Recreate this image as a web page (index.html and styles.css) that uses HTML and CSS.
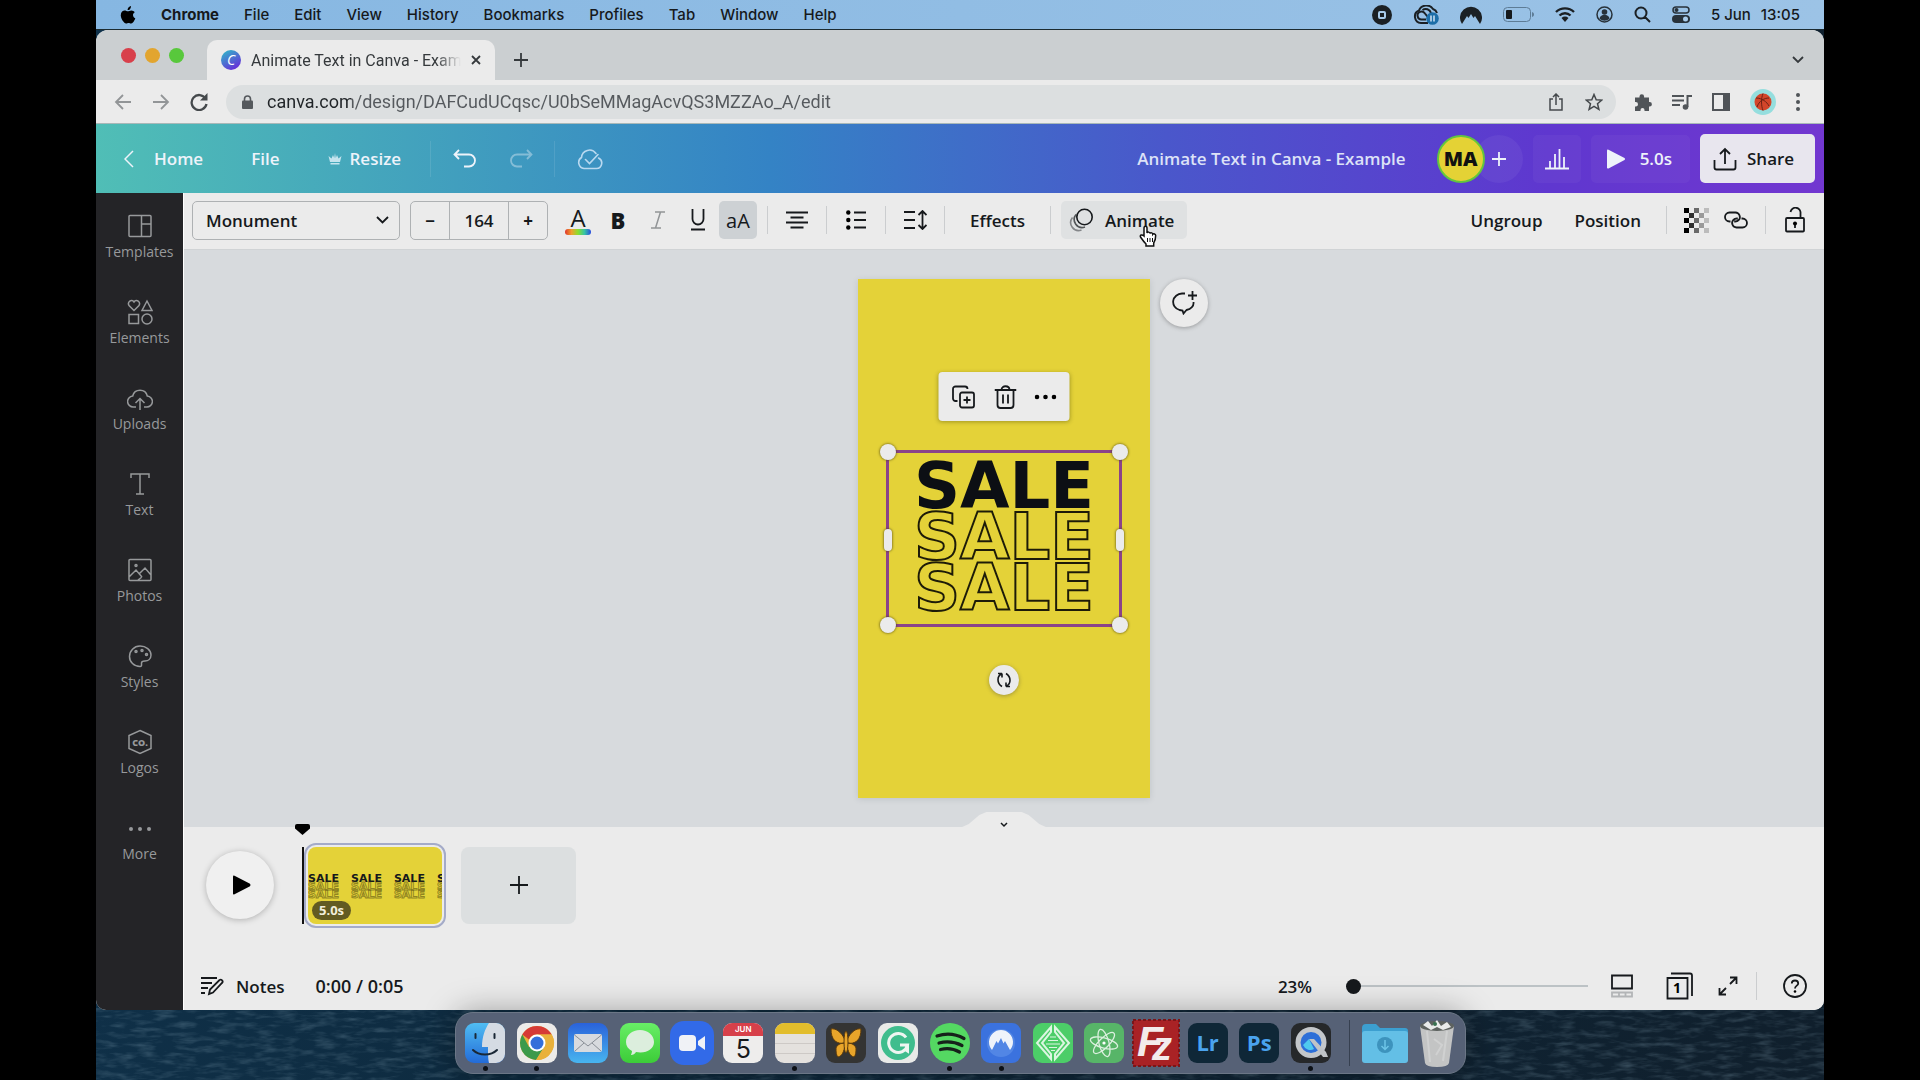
FILE: index.html
```html
<!DOCTYPE html>
<html lang="en">
<head>
  <meta charset="UTF-8">
  <title>Animate Text in Canva - Example</title>
  <link rel="stylesheet" href="styles.css">
</head>
<body>
<div class="desktop">
  <svg class="water" aria-hidden="true">
    <filter id="waves">
      <feTurbulence type="fractalNoise" baseFrequency="0.05 0.2" numOctaves="3" seed="4"/>
      <feColorMatrix values="0 0 0 0 0.3  0 0 0 0 0.45  0 0 0 0 0.55  1.6 0 0 0 -0.7"/>
    </filter>
    <rect width="100%" height="100%" filter="url(#waves)"/>
  </svg>

  <!-- macOS menu bar -->
  <nav class="menubar">
    <svg class="apple" viewBox="0 0 16 18"><path d="M11 0c.1 1.100-.3 2.100-.9 2.900-.6.8-1.600 1.300-2.500 1.200C7.500 3.100 8 2.100 8.500 1.500 9.200.7 10.200.1 11 0zM14.800 6.200c-1.100.7-1.800 1.600-1.800 2.900 0 1.500.9 2.700 2.300 3.200-.5 1.600-1.400 3.200-2.400 4.300-.7.8-1.700 1.200-2.700.8-1.200-.5-2-.5-3.200 0-1 .4-1.900.1-2.600-.6C1.500 13.900.1 10.200 1 7.500 1.600 5.600 3 4.500 4.600 4.500c1.300 0 2.300.8 3.200.8s2-.9 3.600-.9c1.300 0 2.600.7 3.400 1.800z"/></svg>
    <a href="#"><b>Chrome</b></a>
    <a href="#">File</a>
    <a href="#">Edit</a>
    <a href="#">View</a>
    <a href="#">History</a>
    <a href="#">Bookmarks</a>
    <a href="#">Profiles</a>
    <a href="#">Tab</a>
    <a href="#">Window</a>
    <a href="#">Help</a>
    <div class="tray">
      <svg width="20" height="20" viewBox="0 0 20 20"><circle cx="10" cy="10" r="10" fill="#1b2024"/><rect x="7" y="7" width="6" height="6" rx="1" fill="none" stroke="#a8cbea" stroke-width="2"/></svg>
      <svg width="26" height="20" viewBox="0 0 26 20"><g fill="none" stroke="#1b2024" stroke-width="2"><path d="M15 18H8a6.500 6.500 0 0 1-2-12.500A8 8 0 0 1 20 4a6 6 0 0 1 4 4"/><path d="M13 14.500H9a4 4 0 1 1 3-6l4 5M9.500 5a5.500 5.500 0 0 1 8.500 3"/></g><circle cx="19.500" cy="13.500" r="6.300" fill="#1c6ea8"/><path d="M18 10.500v6M21 10.500v6" stroke="#cfe4f4" stroke-width="1.500"/></svg>
      <svg width="22" height="18" viewBox="0 0 22 18"><path d="M2 18A11 11 0 1 1 20 18L15 10l-1.500 2L11 8l-2.500 4L7 10z" fill="#1b2024"/></svg>
      <svg width="31" height="15" viewBox="0 0 31 15"><rect x=".5" y=".5" width="27" height="14" rx="4" fill="none" stroke="#5d7c96"/><rect x="3" y="3" width="6" height="9" rx="1" fill="#15191c"/><path d="M29 5v5c1.500-.5 2-1.500 2-2.500S30.500 5.500 29 5z" fill="#5d7c96"/></svg>
      <svg width="20" height="15" viewBox="0 0 20 15"><g fill="none" stroke="#1b2024" stroke-width="2.400"><path d="M1 5a13 13 0 0 1 18 0M4.500 8.500a8 8 0 0 1 11 0"/></g><path d="M10 15l-3.500-4a5 5 0 0 1 7 0z" fill="#1b2024"/></svg>
      <svg width="17" height="17" viewBox="0 0 17 17"><circle cx="8.500" cy="8.500" r="7.500" fill="none" stroke="#28323a" stroke-width="1.500"/><circle cx="8.500" cy="6" r="2.800" fill="#28323a"/><path d="M3.500 12.500c1-5 9-5 10 0-3 3-7 3-10 0z" fill="#28323a"/></svg>
      <svg width="17" height="17" viewBox="0 0 17 17"><path d="M11 11l5 5M12.500 7a5.500 5.500 0 1 1-11 0 5.500 5.500 0 0 1 11 0z" fill="none" stroke="#1b2024" stroke-width="2"/></svg>
      <svg width="18" height="18" viewBox="0 0 18 18"><rect x="1" y="1" width="16" height="6" rx="3" fill="none" stroke="#28323a" stroke-width="1.500"/><circle cx="4.500" cy="4" r="2" fill="#28323a"/><rect y="9" width="18" height="8" rx="4" fill="#28323a"/><circle cx="13.500" cy="13" r="2.500" fill="#a8cbea"/></svg>
      <span class="clock"><span>5 Jun</span><span>13:05</span></span>
    </div>
  </nav>

  <div class="window">
    <!-- Browser chrome -->
    <div class="tabstrip">
      <div class="lights"><i class="red"></i><i class="amber"></i><i class="green"></i></div>
      <div class="tab">
        <svg class="favicon" width="20" height="20" viewBox="0 0 20 20"><defs><linearGradient id="canva" x1="0" y1="0" x2=".6" y2="1"><stop offset="0" stop-color="#2cc0c8"/><stop offset="1" stop-color="#6531d8"/></linearGradient></defs><circle cx="10" cy="10" r="10" fill="url(#canva)"/><text x="10" y="15">C</text></svg>
        <span class="tab-title">Animate Text in Canva - Example</span>
        <button class="plain" aria-label="Close tab"><svg width="10" height="10" viewBox="0 0 10 10"><path d="M1 1l8 8M9 1l-8 8" class="line2"/></svg></button>
      </div>
      <button class="plain" aria-label="New tab"><svg width="16" height="16" viewBox="0 0 16 16"><path d="M8 1v14M1 8h14" class="line2"/></svg></button>
      <button class="plain push" aria-label="Search tabs"><svg width="12" height="8" viewBox="0 0 12 8"><path d="M1 1l5 5 5-5" class="line2"/></svg></button>
    </div>

    <div class="addressbar">
      <div class="nav-icons">
        <button class="plain faint" aria-label="Back"><svg width="18" height="18" viewBox="0 0 18 18"><path d="M17 9H2M9 2L2 9l7 7" class="line2"/></svg></button>
        <button class="plain faint" aria-label="Forward"><svg width="18" height="18" viewBox="0 0 18 18"><path d="M1 9h15M9 2l7 7-7 7" class="line2"/></svg></button>
        <button class="plain" aria-label="Reload"><svg width="18" height="18" viewBox="0 0 18 18"><path d="M15.500 5.500A7.500 7.500 0 1 0 16.500 11" fill="none" stroke="currentColor" stroke-width="2.300"/><path d="M17.500 0v7.500H10z" fill="currentColor"/></svg></button>
      </div>
      <div class="pill">
        <svg width="11" height="14" viewBox="0 0 11 14"><path d="M2.500 6V4a3 3 0 0 1 6 0v2" fill="none" stroke="#55595d" stroke-width="1.600"/><rect y="5.500" width="11" height="8.500" rx="1" fill="#55595d"/></svg>
        <input class="url" type="text" aria-label="Address" value="canva.com/design/DAFCudUCqsc/U0bSeMMagAcvQS3MZZAo_A/edit">
        <button class="plain" aria-label="Share page"><svg width="14" height="18" viewBox="0 0 14 18"><path d="M4 6H1v11h12V6h-3M7 12V1M4 4l3-3 3 3" fill="none" stroke="currentColor" stroke-width="1.500"/></svg></button>
        <button class="plain" aria-label="Bookmark"><svg width="18" height="18" viewBox="0 0 18 18"><path d="M9 1.500l2.200 5.200 5.600.4-4.300 3.700 1.400 5.600L9 13.400l-4.900 3 1.400-5.600L1.200 7.100l5.600-.4z" fill="none" stroke="currentColor" stroke-width="1.500"/></svg></button>
      </div>
      <div class="ext-icons">
        <svg width="18" height="18" viewBox="0 0 18 18"><path d="M1 4.500h4.500v-1a2.300 2.300 0 0 1 4.600 0v1H15v4.600h.7a2.200 2.200 0 0 1 0 4.400H15V18h-4.500v-1a2 2 0 0 0-4 0v1H1v-4.500h.8a2.200 2.200 0 0 0 0-4.400H1z" fill="#505458"/></svg>
        <svg width="20" height="16" viewBox="0 0 20 16"><path d="M0 2h12M0 6.500h12M0 11h8" stroke="#505458" stroke-width="2"/><path d="M15.500 13V2H20" fill="none" stroke="#505458" stroke-width="2"/><circle cx="13.500" cy="13" r="2.800" fill="#505458"/></svg>
        <svg width="18" height="18" viewBox="0 0 18 18"><path d="M1 1h16v16H1z" fill="none" stroke="#505458" stroke-width="2"/><path d="M11 1h6v16h-6z" fill="#505458"/></svg>
        <svg width="26" height="26" viewBox="0 0 26 26"><circle cx="13" cy="13" r="13" fill="#95dede"/><circle cx="13" cy="13" r="8.500" fill="#d3452a"/><path d="M6 9c6 0 11 4 13 8M13 4.500c-2 5-2 12 0 17M7 18c2-6 7-9 12-9" fill="none" stroke="#6e2114"/></svg>
        <svg width="4" height="18" viewBox="0 0 4 18"><g fill="#505458"><circle cx="2" cy="2" r="2"/><circle cx="2" cy="9" r="2"/><circle cx="2" cy="16" r="2"/></g></svg>
      </div>
    </div>

    <!-- Canva header -->
    <header class="header">
      <button class="head-btn home"><svg width="10" height="18" viewBox="0 0 10 18"><path d="M9 1L1 9l8 8" fill="none" stroke="currentColor" stroke-width="1.500"/></svg>Home</button>
      <button class="head-btn">File</button>
      <button class="head-btn resize"><svg width="14" height="12" viewBox="0 0 14 12"><path d="M2 9L.5 3l3 2.500L5 2l1.200 3L7 0l.8 5L9 2l1.500 3.500 3-2.500L12 9zM2.500 10h9v1.500h-9z" fill="#c4e4ee"/></svg>Resize</button>
      <span class="head-rule"></span>
      <button class="plain light" aria-label="Undo"><svg width="24" height="20" viewBox="0 0 24 20"><path d="M6 1L1.500 5.500 6 10M2 5.500h14a6 6 0 0 1 0 12h-5" class="line2"/></svg></button>
      <button class="plain light dim" aria-label="Redo"><svg width="24" height="20" viewBox="0 0 24 20"><path d="M18 1l4.500 4.500L18 10M22 5.500H8a6 6 0 0 0 0 12h5" class="line2"/></svg></button>
      <span class="head-rule"></span>
      <svg width="26" height="22" viewBox="0 0 26 22"><path d="M7 20.500a6 6 0 0 1-2.500-11A8 8 0 0 1 19 5.500M21.500 10a5.500 5.500 0 0 1-2 10.500H7M8.500 11.500l4 4L21 6.500" fill="none" stroke="#b9d9f0" stroke-width="1.600" stroke-linecap="round"/></svg>
      <input class="doc-title" type="text" aria-label="Design title" value="Animate Text in Canva - Example">
      <div class="people">
        <span class="me">MA</span>
        <button class="add-person" aria-label="Invite people"><svg width="16" height="16" viewBox="0 0 16 16"><path d="M8 1v14M1 8h14" class="line2"/></svg></button>
      </div>
      <button class="tile chart" aria-label="Insights"><svg width="24" height="22" viewBox="0 0 24 22"><path d="M0 20.500h24M5 20v-7M10 20V6M14.500 20V1M19 20V9" fill="none" stroke="currentColor" stroke-width="1.800"/></svg></button>
      <button class="tile preview"><svg width="18" height="20" viewBox="0 0 18 20"><path d="M0 1.500Q0 0 1.500.7l16 8.300q1 1 0 2l-16 8.400Q0 20 0 18.500z" fill="currentColor"/></svg>5.0s</button>
      <button class="share"><svg width="24" height="24" viewBox="0 0 24 24"><path d="M1.500 13v7.500a2 2 0 0 0 2 2h17a2 2 0 0 0 2-2V13M12 17V2M7 7l5-5 5 5" class="line2"/></svg>Share</button>
    </header>

    <div class="workspace">
      <nav class="sidebar">
        <a href="#"><svg viewBox="0 0 26 26"><path d="M3 2.500h20a1 1 0 0 1 1 1v19a1 1 0 0 1-1 1H3a1 1 0 0 1-1-1v-19a1 1 0 0 1 1-1zM14.500 2.500v21M14.500 11H24"/></svg>Templates</a>
        <a href="#"><svg viewBox="0 0 26 26"><path d="M7 11.500L2 6.500C0 3 4.500-.5 7 3c2.500-3.500 7 0 5 3.500zM20 2l5 9.500H15zM2 15.500h9.500v9H2z"/><circle cx="20" cy="20" r="5"/></svg>Elements</a>
        <a href="#"><svg viewBox="0 0 26 26"><path d="M9 22H6.500a5.500 5.500 0 0 1-.8-11 7.500 7.500 0 0 1 14.600 0A5.500 5.500 0 0 1 19.500 22H17M13 25V14M8.500 18l4.500-4.500 4.500 4.500"/></svg>Uploads</a>
        <a href="#"><svg viewBox="0 0 26 26"><path d="M4 7V3h18v4M13 3v20M9 23h8"/></svg>Text</a>
        <a href="#"><svg viewBox="0 0 26 26"><path d="M3 2.500h20a1 1 0 0 1 1 1v19a1 1 0 0 1-1 1H3a1 1 0 0 1-1-1v-19a1 1 0 0 1 1-1zM2 20l7-7 6 7M12 17l6-6 6 7M11 23l4-3"/><circle cx="9" cy="8.500" r="1"/></svg>Photos</a>
        <a href="#"><svg viewBox="0 0 26 26"><path d="M13 23.500c-6 0-10.500-4.500-10.500-10S7 3 13 3s11 4 11 9c0 4-3 6-6 6-2 0-3.500 0-3.500 2 0 1.500.5 3.500-1.500 3.500z"/><circle cx="9" cy="8.500" r="1"/><circle cx="15" cy="7.500" r="1"/><circle cx="19.500" cy="11.500" r="1"/></svg>Styles</a>
        <a href="#"><svg viewBox="0 0 26 26"><path d="M13 1.500l11 5v13l-11 5-11-5v-13z"/><text x="13" y="17">CO.</text></svg>Logos</a>
        <a href="#"><svg viewBox="0 0 26 26"><g class="solid"><circle cx="4" cy="14" r="2"/><circle cx="13" cy="14" r="2"/><circle cx="22" cy="14" r="2"/></g></svg>More</a>
      </nav>

      <main class="editor">
        <div class="toolbar">
          <div class="font-picker">
            <select aria-label="Font"><option>Monument</option></select>
            <svg width="13" height="8" viewBox="0 0 13 8"><path d="M1 1l5.500 5.500L12 1" class="line2"/></svg>
          </div>
          <div class="stepper">
            <button aria-label="Decrease font size">−</button>
            <input type="text" aria-label="Font size" value="164">
            <button aria-label="Increase font size">+</button>
          </div>
          <div class="tools">
            <button class="tool color" aria-label="Text colour"><span>A</span><i></i></button>
            <button class="tool" aria-label="Bold"><b>B</b></button>
            <button class="tool faint" aria-label="Italic"><svg width="16" height="18" viewBox="0 0 16 18"><path d="M5 1h10M1 17h10M10.500 1l-5 16" fill="none" stroke="currentColor" stroke-width="1.500"/></svg></button>
            <button class="tool" aria-label="Underline"><svg width="16" height="22" viewBox="0 0 16 22"><path d="M2.500 0v10a5.500 5.500 0 0 0 11 0V0M1 20.500h14" class="line2"/></svg></button>
            <button class="tool active" aria-label="Uppercase">aA</button>
          </div>
          <span class="rule"></span>
          <button class="tool" aria-label="Alignment"><svg width="22" height="18" viewBox="0 0 22 18"><path d="M0 1.500h22M4.500 6.500h13M0 11.500h22M4.500 16.500h13" class="line2"/></svg></button>
          <span class="rule"></span>
          <button class="tool" aria-label="List"><svg width="20" height="20" viewBox="0 0 20 20"><path d="M8 2.500h12M8 10h12M8 17.500h12" class="line2"/><circle cx="2.300" cy="2.500" r="2.200"/><circle cx="2.300" cy="10" r="2.200"/><circle cx="2.300" cy="17.500" r="2.200"/></svg></button>
          <span class="rule"></span>
          <button class="tool" aria-label="Spacing"><svg width="23" height="20" viewBox="0 0 23 20"><path d="M0 2h11M0 10h11M0 18h11M18.500 1.500v17M14.500 5l4-4 4 4M14.500 15l4 4 4-4" class="line2"/></svg></button>
          <span class="rule"></span>
          <button class="tool words">Effects</button>
          <span class="rule"></span>
          <button class="tool animate">
            <svg width="24" height="24" viewBox="0 0 24 24"><g fill="none" stroke="currentColor" stroke-width="1.600"><circle cx="15.500" cy="9" r="7.700"/><path d="M7 6.500a8 8 0 0 0 9 12.500" opacity=".7"/><path d="M3.500 9.500a8 8 0 0 0 9 12.500" opacity=".45"/></g></svg>
            Animate
            <svg class="cursor" viewBox="0 0 20 22"><path d="M6 11V3c0-2.500 3-2.500 3 0v5c.5-1.500 3-1 3 .5.600-1.200 2.800-.7 2.800.8.800-1 2.900-.3 2.900 1.300 0 4-.7 5.400-2 7.400V21H8v-2c-2-2-3.500-4-5.500-7C1.500 10 4 9 6 11z" fill="#fff" stroke="#111" stroke-width="1.500"/><path d="M9.500 13v4M12 13v4M14.500 13v4" stroke="#111"/></svg>
          </button>
          <div class="tools push">
            <button class="tool words">Ungroup</button>
            <button class="tool words">Position</button>
          </div>
          <span class="rule"></span>
          <div class="tools">
            <button class="tool" aria-label="Transparency"><svg width="25" height="25" viewBox="0 0 25 25"><path d="M0 0h5v5H0zM0 10h5v5H0zM0 20h5v5H0z"/><path d="M5 5h5v5H5zM5 15h5v5H5z" opacity=".8"/><path d="M10 0h5v5h-5zM10 10h5v5h-5zM10 20h5v5h-5z" opacity=".55"/><path d="M15 5h5v5h-5zM15 15h5v5h-5z" opacity=".35"/><path d="M20 0h5v5h-5zM20 10h5v5h-5zM20 20h5v5h-5z" opacity=".2"/></svg></button>
            <button class="tool" aria-label="Link"><svg width="24" height="18" viewBox="0 0 24 18"><path d="M6.500 10.500h-1a4.500 4.500 0 0 1 0-9h6a4.500 4.500 0 0 1 3.200 7.500q-1.500 1.500-3.500 1.500h-1M17.500 7.500h1a4.500 4.500 0 0 1 0 9h-6a4.500 4.500 0 0 1-3.200-7.500q1.500-1.500 3.500-1.500h1" class="line2"/></svg></button>
          </div>
          <span class="rule"></span>
          <button class="tool" aria-label="Lock"><svg width="20" height="26" viewBox="0 0 20 26"><path d="M2 11h16a1 1 0 0 1 1 1v11.500a1 1 0 0 1-1 1H2a1 1 0 0 1-1-1V12a1 1 0 0 1 1-1zM15.500 11V6.500A5 5 0 0 0 5.500 5M10 17v4" class="line2"/><circle cx="10" cy="16.500" r="2"/></svg></button>
        </div>

        <div class="canvas">
          <div class="artboard">
            <div class="float-tools">
              <button class="plain" aria-label="Duplicate"><svg width="24" height="24" viewBox="0 0 24 24"><path d="M6 16H4a2.500 2.500 0 0 1-2.500-2.500V4A2.500 2.500 0 0 1 4 1.500h9.500A2.500 2.500 0 0 1 16 4M10.500 7.500h10a2 2 0 0 1 2 2v11a2 2 0 0 1-2 2h-10a2 2 0 0 1-2-2v-11a2 2 0 0 1 2-2zM15.500 11.500v7M12 15h7" class="line2"/></svg></button>
              <button class="plain" aria-label="Delete"><svg width="22" height="24" viewBox="0 0 22 24"><path d="M0 5h22M7 5c0-5 8-5 8 0M3 5v15a3 3 0 0 0 3 3h10a3 3 0 0 0 3-3V5M8.500 9.500v9M13.500 9.500v9" class="line2"/></svg></button>
              <button class="plain" aria-label="More"><svg width="22" height="6" viewBox="0 0 22 6"><circle cx="2.500" cy="3" r="2.300"/><circle cx="11" cy="3" r="2.300"/><circle cx="19.500" cy="3" r="2.300"/></svg></button>
            </div>
            <div class="selection">
              <div class="sale">SALE</div>
              <div class="sale outline">SALE</div>
              <div class="sale outline">SALE</div>
              <i class="knob tl"></i><i class="knob tr"></i><i class="knob bl"></i><i class="knob br"></i>
              <i class="grip left"></i><i class="grip right"></i>
            </div>
            <button class="rotate" aria-label="Rotate"><svg width="16" height="16" viewBox="0 0 16 16"><path d="M6 1.500H2M6 1.500v4M5.500 2C1 4 .5 11 6 14.500M10 14.500h4M10 14.500v-4M10.500 14C15 12 15.500 5 10 1.500" fill="none" stroke="currentColor" stroke-width="1.600"/></svg></button>
            <button class="comment" aria-label="Comment"><svg width="26" height="24" viewBox="0 0 26 24"><path d="M14 2.500h-3a9.500 8.500 0 0 0-2.500 16.500l3 .5 1 3 3-3.500C20 18 23 15 22.500 11M21.500 0v9M17 4.500h9" class="line2"/></svg></button>
          </div>
          <button class="collapse" aria-label="Collapse timeline"><svg width="8" height="6" viewBox="0 0 8 6"><path d="M1 1l3 3 3-3" fill="none" stroke="currentColor" stroke-width="1.500"/></svg></button>
        </div>

        <div class="timeline">
          <div class="scenes">
            <button class="play" aria-label="Play"><svg width="18" height="20" viewBox="0 0 18 20"><path d="M0 1.500Q0 0 1.500.7l15.500 8q1 1.300 0 2.600l-15.500 8Q0 20 0 18.500z"/></svg></button>
            <div class="playhead"><svg width="15" height="11" viewBox="0 0 15 11"><path d="M2 0h11q2 0 2 2v2.500L7.500 11 0 4.500V2Q0 0 2 0z"/></svg></div>
            <button class="scene" aria-label="Scene 1">
              <span class="frames">
                <span class="mini"><b>SALE</b><b>SALE</b><b>SALE</b></span>
                <span class="mini"><b>SALE</b><b>SALE</b><b>SALE</b></span>
                <span class="mini"><b>SALE</b><b>SALE</b><b>SALE</b></span>
                <span class="mini"><b>SALE</b><b>SALE</b><b>SALE</b></span>
              </span>
              <span class="length">5.0s</span>
            </button>
            <button class="add-scene" aria-label="Add page"><svg width="20" height="20" viewBox="0 0 20 20"><path d="M10 1v18M1 10h18" class="line2"/></svg></button>
          </div>
          <div class="statusbar">
            <button class="plain notes"><svg width="23" height="20" viewBox="0 0 23 20"><path d="M0 2h16M0 7h11M0 12h7M0 17h4M8 18l1-4.500L18.500 4q2-1 3 1 .5 1-.5 2L12 16.500z" class="line2"/></svg>Notes</button>
            <span class="time">0:00 / 0:05</span>
            <label class="zoom" for="zoom">23%</label>
            <input id="zoom" class="slider" type="range" min="0" max="100" value="0">
            <button class="plain view" aria-label="Timeline view"><svg width="24" height="24" viewBox="0 0 24 24"><path d="M2 1.500h20v13H2z" class="line2"/><path d="M2 18.500h20v4H2zM9 18.500v4M15.500 18.500v4" fill="none" stroke="#b3b5b7" stroke-width="1.800"/></svg></button>
            <button class="plain pages" aria-label="Pages"><svg width="28" height="28" viewBox="0 0 28 28"><path d="M1.500 6h20v20.500h-20zM5 1.500h19a2 2 0 0 1 2 2V24" class="line2"/><text x="11" y="21">1</text></svg></button>
            <button class="plain full" aria-label="Full screen"><svg width="20" height="20" viewBox="0 0 20 20"><path d="M12 1.500h6.500V8M18 2l-6 6M8 18.500H1.500V12M2 18l6-6" class="line2"/></svg></button>
            <span class="rule"></span>
            <button class="plain help" aria-label="Help"><svg width="24" height="24" viewBox="0 0 24 24"><circle cx="12" cy="12" r="11" class="line2"/><path d="M8.800 9.500c0-4 6.400-4 6.400 0 0 2.200-3.200 2.200-3.200 5" class="line2"/><circle cx="12" cy="17.500" r="1.300"/></svg></button>
          </div>
        </div>
      </main>
    </div>
  </div>

  <!-- Dock -->
  <footer class="dock">
    <div class="apps">
      <span class="app on"><svg viewBox="0 0 40 40"><defs><linearGradient id="gf" x2="0" y2="1"><stop stop-color="#50bdf2"/><stop offset="1" stop-color="#236bd8"/></linearGradient></defs><rect width="40" height="40" rx="9" fill="url(#gf)"/><path d="M24 0h7a9 9 0 0 1 9 9v22a9 9 0 0 1-9 9h-7c-1-5-1-9-1-16h-6C17 14 20 6 24 0z" fill="#d5dbe3"/><path d="M8 27c6 6 18 6 24 0M10.500 11v4M29.500 11v4" fill="none" stroke="#1a2836" stroke-width="2" stroke-linecap="round"/></svg></span>
      <span class="app on"><svg viewBox="0 0 40 40"><rect width="40" height="40" rx="9" fill="#ecebe9"/><circle cx="20" cy="20" r="17" fill="#e9b13b"/><path d="M5.300 11.500A17 17 0 0 1 34.700 11.500H20a9 9 0 0 0-8 5z" fill="#d63a36"/><path d="M5.300 11.500A17 17 0 0 0 19 37l8-13H12z" fill="#3c9a4b"/><path d="M20 11.500h14.700A17 17 0 0 1 19 37l8.500-13z" fill="#e9b13b"/><circle cx="20" cy="20" r="8.500" fill="#fff"/><circle cx="20" cy="20" r="6.500" fill="#346fda"/></svg></span>
      <span class="app"><svg viewBox="0 0 40 40"><defs><linearGradient id="gm" x2="0" y2="1"><stop stop-color="#2a62da"/><stop offset="1" stop-color="#48b5ef"/></linearGradient></defs><rect width="40" height="40" rx="9" fill="url(#gm)"/><rect x="6" y="11" width="28" height="18" rx="2" fill="#d8dade"/><path d="M6.500 12L20 23l13.500-11M7 28l9-8M33 28l-9-8" fill="none" stroke="#898e96"/></svg></span>
      <span class="app"><svg viewBox="0 0 40 40"><defs><linearGradient id="gg" x2="0" y2="1"><stop stop-color="#68ee66"/><stop offset="1" stop-color="#3ccc38"/></linearGradient></defs><rect width="40" height="40" rx="9" fill="url(#gg)"/><path d="M20 7c-8 0-14 5-14 12 0 4 2 7 6 9 0 2-1 3-1 4 2 0 4-1 5-3 10 2 18-3 18-10S28 7 20 7z" fill="#dceedd"/></svg></span>
      <span class="app big"><svg viewBox="0 0 44 44"><rect width="44" height="44" rx="14" fill="#326ae8"/><rect x="9" y="14" width="17" height="16" rx="4" fill="#f0f2f6"/><path d="M28 20l7-5v14l-7-5z" fill="#f0f2f6"/></svg></span>
      <span class="app"><span class="cal"><small>JUN</small><span>5</span></span></span>
      <span class="app on"><svg viewBox="0 0 40 40"><rect width="40" height="40" rx="9" fill="#e4e1de"/><path d="M0 11V9a9 9 0 0 1 9-9h22a9 9 0 0 1 9 9v2z" fill="#e2bd2c"/><path d="M0 20.500h40M0 30.500h40" stroke="#cdc9c6"/></svg></span>
      <span class="app"><svg viewBox="0 0 40 40"><rect width="40" height="40" rx="9" fill="#343433"/><g fill="#e9a52a" stroke="#5b3b0d"><path d="M19 17C15 8 9 5 5 6c0 5 1 9 4 12 3 2 6 3 10 2zM21 17c4-9 10-12 14-11 0 5-1 9-4 12-3 2-6 3-10 2zM19 20c-5 0-8 2-9 5 0 4 0 7 2 9 4-1 6-5 7-12zM21 20c5 0 8 2 9 5 0 4 0 7-2 9-4-1-6-5-7-12z"/><ellipse cx="20" cy="19" rx="2" ry="11"/></g></svg></span>
      <span class="app"><svg viewBox="0 0 40 40"><rect width="40" height="40" rx="9" fill="#e9eae8"/><circle cx="20" cy="20" r="17" fill="#3fbd8d"/><path d="M28 14.500A9.500 9.500 0 1 0 29.500 22H22M29.500 22v6l-3-2" fill="none" stroke="#eef5f1" stroke-width="3"/></svg></span>
      <span class="app on"><svg viewBox="0 0 40 40"><circle cx="20" cy="20" r="20" fill="#54d862"/><path d="M7 13c9-3 19-2 27 2.500M9 20c8-2 16-1 23 2.500M10.500 26.500c6-1.500 13-1 19 2.500" fill="none" stroke="#16221a" stroke-width="3.200" stroke-linecap="round"/></svg></span>
      <span class="app on"><svg viewBox="0 0 40 40"><rect width="40" height="40" rx="9" fill="#3b72de"/><circle cx="20" cy="20" r="14" fill="#5286e5"/><path d="M11 27a12 12 0 1 1 18 0l-5-9-1.500 2.500L20 15l-3 5.500-1.500-2.500z" fill="#eff3fa"/></svg></span>
      <span class="app"><svg viewBox="0 0 40 40"><rect width="40" height="40" rx="9" fill="#4ccd68"/><g fill="none" stroke="#dcf6e1" stroke-width="2"><path d="M18 4L4 20l14 16v-5L9 20l9-11zM22 4l14 16-14 16v-5l9-11-9-11z"/><path d="M17 14h6M15 17.500h10M13 21h14M16 24.500h8M18 27.500h4" stroke-width="1"/></g></svg></span>
      <span class="app"><svg viewBox="0 0 40 40"><rect width="40" height="40" rx="9" fill="#57b568"/><g fill="none" stroke="#dcf0df" stroke-width="1.300"><ellipse cx="20" cy="20" rx="14" ry="5" transform="rotate(15 20 20)"/><ellipse cx="20" cy="20" rx="14" ry="5" transform="rotate(75 20 20)"/><ellipse cx="20" cy="20" rx="14" ry="5" transform="rotate(135 20 20)"/></g><circle cx="20" cy="20" r="1.600" fill="#fff"/></svg></span>
      <span class="app fz"><svg viewBox="0 0 48 48"><rect x="1" y="1" width="46" height="46" fill="#a92225" stroke="#7c1518" stroke-width="2" stroke-dasharray="3 2"/><text x="5" y="37" class="fz-f">F</text><text x="20" y="41" class="fz-z">z</text></svg></span>
      <span class="app"><span class="adobe">Lr</span></span>
      <span class="app"><span class="adobe">Ps</span></span>
      <span class="app on"><svg viewBox="0 0 40 40"><rect width="40" height="40" rx="9" fill="#26282a"/><circle cx="20" cy="19.500" r="13" fill="#2d6fd8" stroke="#c4c7ca" stroke-width="5"/><path d="M18 16l14 18h5l-2-5-12-13z" fill="#bfc3c7"/><path d="M12 22a8 8 0 0 0 11 4l-5-10z" fill="#4fc9ee"/></svg></span>
    </div>
    <span class="dock-rule"></span>
    <svg class="folder" viewBox="0 0 46 40"><path d="M0 5q0-4 4-4h10l4 4h25q3 0 3 3v8H0z" fill="#3c9fd0"/><rect y="8" width="46" height="32" rx="3" fill="#63bfe6"/><circle cx="23" cy="22" r="8" fill="#3d93bd"/><path d="M23 17v9M19.500 23l3.500 3.500 3.500-3.500" fill="none" stroke="#6ec5e8" stroke-width="1.500"/></svg>
    <svg class="trash" viewBox="0 0 36 48"><path d="M1 7h34l-5 37q-1 4-12 4T6 44z" fill="#c3c4c4"/><path d="M8 12l3 31M28 12l-4 30M15 20l8 6-6 10" fill="none" stroke="#d0d1d1" stroke-width="2"/><ellipse cx="18" cy="7" rx="17" ry="5" fill="#5d625f"/><path d="M4 6l5-4 4 5 5-6 4 6 6-4 4 5-8 3-6-3-6 3z" fill="#e9ebea"/><circle cx="16" cy="5" r="2" fill="#37704e"/></svg>
  </footer>
</div>
</body>
</html>
```
FILE: styles.css
```css
* {
  box-sizing: border-box;
}

body {
  margin: 0;
  background: #000;
  font-family: "Open Sans", "Noto Sans", sans-serif;
  color: #16191c;
}

button, input, select {
  font: inherit;
  color: inherit;
  border: none;
  background: none;
  padding: 0;
  margin: 0;
}

a {
  color: inherit;
  text-decoration: none;
}

svg {
  flex-shrink: 0;
}

.line2 {
  fill: none;
  stroke: currentColor;
  stroke-width: 1.8;
}

.desktop {
  position: relative;
  height: 100vh;
  margin: 0 5%;
  display: flex;
  flex-direction: column;
  background: linear-gradient(100deg, #10324b 0%, #0e2b40 30%, #101f2c 100%);
  overflow: hidden;
}

.water {
  position: absolute;
  left: 0;
  bottom: 0;
  width: 100%;
  height: 72px;
  opacity: .35;
}

/* menu bar */

.menubar {
  height: 30px;
  padding: 0 24px;
  display: flex;
  align-items: center;
  gap: 25px;
  background: linear-gradient(90deg, #86b7e2, #9cc3e6);
  border-bottom: 1px solid #1c2b30;
  font-family: Inter, sans-serif;
  font-size: 15px;
  font-weight: 500;
  position: relative;
}

.apple {
  width: 16px;
  height: 18px;
}

.tray {
  margin-left: auto;
  display: flex;
  align-items: center;
  gap: 21px;
}

.clock {
  display: flex;
  gap: 10px;
}

/* window */

.window {
  flex: 1;
  min-height: 0;
  display: flex;
  flex-direction: column;
  position: relative;
  background: #ebebeb;
  border-radius: 12px 12px 10px 10px;
  overflow: hidden;
}

.plain {
  display: flex;
  align-items: center;
}

.push {
  margin-left: auto;
}

.faint {
  color: #929597;
}

.tabstrip {
  height: 50px;
  padding: 10px 20px 0 25px;
  display: flex;
  align-items: center;
  background: #cbcfd1;
  color: #35393c;
}

.lights {
  display: flex;
  gap: 9px;
  margin: 0 23px 10px 0;
}

.lights i {
  width: 15px;
  height: 15px;
  border-radius: 50%;
}

.red { background: #d8404b; }
.amber { background: #e2a52f; }
.green { background: #58c83c; }

.tab {
  width: 288px;
  height: 40px;
  margin-right: 18px;
  padding: 0 14px;
  display: flex;
  align-items: center;
  gap: 10px;
  background: #ebebeb;
  border-radius: 10px 10px 0 0;
}

.favicon text {
  fill: #fff;
  font-size: 14px;
  font-style: italic;
  text-anchor: middle;
}

.tab-title {
  flex: 1;
  overflow: hidden;
  white-space: nowrap;
  font-family: Roboto, sans-serif;
  font-size: 16px;
  mask-image: linear-gradient(90deg, #000 88%, transparent);
}

.addressbar {
  height: 44px;
  padding: 0 24px 0 18px;
  display: flex;
  align-items: center;
  color: #45494c;
  border-bottom: 1px solid #a8b8b8;
}

.nav-icons {
  display: flex;
  gap: 20px;
  margin-right: 18px;
}

.pill {
  flex: 1;
  height: 34px;
  padding: 0 13px 0 16px;
  display: flex;
  align-items: center;
  gap: 22px;
  background: #dcdfe0;
  border-radius: 17px;
}

.url {
  flex: 1;
  margin-left: -8px;
  font-family: Roboto, sans-serif;
  font-size: 18px;
  color: transparent;
  background: linear-gradient(90deg, #202427 84px, #55595d 84px);
  background-clip: text;
}

.ext-icons {
  display: flex;
  align-items: center;
  gap: 20px;
  margin-left: 18px;
}

/* header */

.header {
  height: 69px;
  padding: 0 9px 0 4px;
  display: flex;
  align-items: center;
  background: linear-gradient(90deg, #50beb6 0%, #3483c5 39%, #4a57cb 62%, #5f37cf 84%, #7237d0 100%);
  color: #eef3fa;
  font-size: 17px;
  font-weight: 600;
}

.head-btn {
  padding: 0 24px;
  display: flex;
  align-items: center;
}

.home { gap: 20px; }
.resize { gap: 8px; }

.head-rule {
  width: 1px;
  height: 36px;
  margin: 0 22px 0 5px;
  background: rgba(255, 255, 255, .1);
}

.light + .light {
  margin: 0 16px 0 32px;
}

.dim {
  opacity: .4;
}

.doc-title {
  flex: 1;
  min-width: 0;
  margin-right: 31px;
  text-align: right;
  color: #dde2f7;
}

.people {
  display: flex;
  margin-right: 10px;
}

.me {
  position: relative;
  width: 48px;
  height: 48px;
  display: flex;
  align-items: center;
  justify-content: center;
  border: 2px solid #62c63e;
  border-radius: 50%;
  background: #e4d235;
  color: #111;
  font-size: 20px;
  font-weight: 800;
}

.add-person {
  width: 48px;
  height: 48px;
  margin-left: -10px;
  padding-left: 16px;
  display: flex;
  align-items: center;
  border-radius: 50%;
  background: rgba(255, 255, 255, .05);
}

.tile {
  height: 48px;
  display: flex;
  align-items: center;
  border-radius: 5px;
  background: rgba(255, 255, 255, .04);
}

.chart {
  padding: 0 12px;
  margin-right: 10px;
}

.preview {
  padding: 0 18px 0 16px;
  margin-right: 10px;
  gap: 15px;
}

.share {
  height: 49px;
  width: 115px;
  padding-left: 13px;
  display: flex;
  align-items: center;
  gap: 10px;
  border-radius: 5px;
  background: #e8e6ee;
  color: #16191c;
}

/* side navigation */

.workspace {
  flex: 1;
  min-height: 0;
  display: flex;
}

.sidebar {
  width: 88px;
  padding-top: 20px;
  display: flex;
  flex-direction: column;
  gap: 37px;
  background: #242427;
  border-right: 1px solid #fff;
  color: #97999b;
  font-size: 14px;
  line-height: 20px;
}

.sidebar a {
  display: flex;
  flex-direction: column;
  align-items: center;
  gap: 3px;
}

.sidebar svg {
  width: 26px;
  height: 26px;
  fill: none;
  stroke: #97999b;
  stroke-width: 1.5;
}

.sidebar .solid {
  fill: #97999b;
  stroke: none;
}

.sidebar text {
  fill: #97999b;
  stroke: none;
  font-size: 9px;
  font-weight: 800;
  text-anchor: middle;
}

.editor {
  flex: 1;
  min-width: 0;
  display: flex;
  flex-direction: column;
}

/* text toolbar */

.toolbar {
  height: 57px;
  padding: 0 10px 2px 8px;
  display: flex;
  align-items: center;
  border-bottom: 1px solid #d0d3d5;
  font-size: 17px;
  font-weight: 600;
}

.font-picker {
  position: relative;
  display: flex;
  align-items: center;
  margin-right: 10px;
}

.font-picker select {
  width: 208px;
  height: 39px;
  padding: 0 13px;
  appearance: none;
  border: 1px solid #aeb1b3;
  border-radius: 5px;
}

.font-picker svg {
  position: absolute;
  right: 11px;
}

.stepper {
  display: flex;
  height: 39px;
  margin-right: 11px;
  border: 1px solid #aeb1b3;
  border-radius: 5px;
}

.stepper button {
  width: 38px;
  font-weight: 700;
}

.stepper input {
  width: 60px;
  text-align: center;
  border: solid #aeb1b3;
  border-width: 0 1px;
}

.tools {
  display: flex;
  gap: 2px;
}

.tool {
  position: relative;
  min-width: 38px;
  height: 38px;
  display: flex;
  align-items: center;
  justify-content: center;
  border-radius: 5px;
}

.tool b {
  font-size: 22px;
  font-weight: 800;
}

.color {
  flex-direction: column;
  font-size: 24px;
  font-weight: 400;
  line-height: 23px;
}

.color i {
  width: 26px;
  height: 6px;
  border-radius: 3px;
  background: linear-gradient(90deg, #e0352b, #f0a02c, #8adf2c, #35c5a5, #2b4be0);
}

.active {
  background: #cdd1d4;
  font-size: 20px;
  font-weight: 400;
}

.words {
  padding: 0 15px;
}

.animate {
  padding: 0 13px 0 8px;
  gap: 12px;
  background: #dfe1e2;
}

.cursor {
  position: absolute;
  right: 29px;
  bottom: -8px;
  width: 20px;
  height: 22px;
}

.rule {
  width: 1px;
  height: 28px;
  margin: 0 10px;
  background: #cbcdcf;
}

/* design canvas */

.canvas {
  position: relative;
  flex: 1;
  min-height: 0;
  padding: 29px 0;
  display: flex;
  justify-content: center;
  background: #d7dadd;
}

.artboard {
  position: relative;
  height: 100%;
  aspect-ratio: 9 / 16;
  background: #e4d238;
  box-shadow: 0 1px 6px rgba(60, 70, 80, .15);
}

.float-tools {
  position: absolute;
  top: 18%;
  left: 50%;
  transform: translateX(-50%);
  width: 131px;
  height: 49px;
  padding: 0 13px;
  display: flex;
  align-items: center;
  justify-content: space-between;
  border-radius: 4px;
  background: #ebebeb;
  box-shadow: 0 1px 4px rgba(60, 60, 0, .4);
}

.selection {
  position: absolute;
  top: 33%;
  left: 28px;
  right: 28px;
  height: 177px;
  padding-top: 8px;
  border: 3px solid #8b4389;
}

.sale {
  font-family: "DejaVu Sans", sans-serif;
  font-size: 64px;
  font-weight: 700;
  line-height: 51px;
  text-align: center;
  color: #0c0f14;
}

.outline {
  color: transparent;
  -webkit-text-stroke: 2px #1d1b08;
}

.knob {
  position: absolute;
  width: 16px;
  height: 16px;
  border-radius: 50%;
  background: #ebebeb;
  box-shadow: 0 0 2px 1px rgba(80, 70, 20, .5);
}

.tl { top: -9px; left: -9px; }
.tr { top: -9px; right: -9px; }
.bl { bottom: -9px; left: -9px; }
.br { bottom: -9px; right: -9px; }

.grip {
  position: absolute;
  top: 76px;
  width: 8px;
  height: 22px;
  border-radius: 4px;
  background: #ebebeb;
  box-shadow: 0 0 2px 1px rgba(80, 70, 20, .5);
}

.left { left: -5px; }
.right { right: -5px; }

.rotate, .comment {
  position: absolute;
  display: flex;
  align-items: center;
  justify-content: center;
  border-radius: 50%;
  background: #ebebeb;
  box-shadow: 0 1px 4px rgba(60, 60, 60, .4);
}

.rotate {
  top: 386px;
  left: 50%;
  width: 30px;
  height: 30px;
  margin-left: -15px;
}

.comment {
  top: 0;
  left: 100%;
  width: 48px;
  height: 48px;
  margin-left: 10px;
}

.collapse {
  position: absolute;
  bottom: -1px;
  left: 50%;
  width: 88px;
  height: 16px;
  margin-left: -44px;
  display: flex;
  align-items: flex-end;
  justify-content: center;
  background: #ebebeb;
  clip-path: polygon(0 100%, 10% 75%, 22% 18%, 30% 0, 70% 0, 78% 18%, 90% 75%, 100% 100%);
}

/* timeline */

.timeline {
  height: 183px;
  display: flex;
  flex-direction: column;
  justify-content: space-between;
  background: #ebebeb;
}

.scenes {
  height: 116px;
  padding-left: 22px;
  display: flex;
  align-items: center;
}

.play {
  width: 68px;
  height: 68px;
  padding-left: 4px;
  display: flex;
  align-items: center;
  justify-content: center;
  border-radius: 50%;
  background: #f0f0f0;
  box-shadow: 0 1px 6px rgba(0, 0, 0, .25);
}

.playhead {
  position: relative;
  width: 2px;
  height: 77px;
  margin-left: 28px;
  background: #111;
}

.playhead svg {
  position: absolute;
  left: -7px;
  top: -23px;
}

.scene {
  position: relative;
  width: 142px;
  height: 85px;
  padding: 2px;
  border: 2px solid #a4abc8;
  border-radius: 12px;
}

.frames {
  height: 100%;
  padding-top: 4px;
  display: flex;
  align-items: center;
  gap: 12px;
  overflow: hidden;
  border-radius: 8px;
  background: #e4d238;
}

.mini {
  flex-shrink: 0;
  font-family: "DejaVu Sans", sans-serif;
  font-size: 11px;
  line-height: 8px;
}

.mini b {
  display: block;
}

.mini b + b {
  color: transparent;
  -webkit-text-stroke: 1px rgba(60, 55, 10, .5);
}

.length {
  position: absolute;
  left: 6px;
  bottom: 6px;
  padding: 0 7px;
  border-radius: 10px;
  background: #625b22;
  color: #f2efdc;
  font-size: 13px;
  font-weight: 700;
  line-height: 19px;
}

.add-scene {
  width: 115px;
  height: 77px;
  margin-left: 15px;
  display: flex;
  align-items: center;
  justify-content: center;
  border-radius: 8px;
  background: #dcdfe0;
}

.statusbar {
  height: 48px;
  padding: 0 17px;
  display: flex;
  align-items: center;
  font-size: 17px;
  font-weight: 600;
}

.notes {
  gap: 12px;
}

.time {
  margin-left: 31px;
  font-size: 18px;
}

.zoom {
  margin-left: auto;
}

.slider {
  width: 242px;
  height: 16px;
  margin: 0 22px 0 34px;
  appearance: none;
  background: linear-gradient(#bcc2c5, #bcc2c5) center / 100% 2px no-repeat;
}

.slider::-webkit-slider-thumb {
  appearance: none;
  width: 15px;
  height: 15px;
  border-radius: 50%;
  background: #16191c;
}

.view { margin-right: 32px; }
.pages { margin-right: 24px; }
.statusbar .rule { margin: 0 26px 0 18px; }

.pages text {
  font-size: 14px;
  font-weight: 700;
  text-anchor: middle;
}

/* dock */

.dock {
  position: relative;
  align-self: center;
  width: 58%;
  min-width: 1011px;
  height: 62px;
  margin: 2px 0 6px;
  padding: 0 10px 0 4px;
  display: flex;
  align-items: center;
  border: 1px solid #6b7686;
  border-radius: 18px;
  background: #566176;
  box-shadow: 0 0 32px rgba(0, 0, 0, .35);
}

.apps {
  flex: 1;
  display: flex;
}

.app {
  position: relative;
  flex: 1;
  height: 48px;
  display: flex;
  align-items: center;
  justify-content: center;
}

.app svg {
  width: 40px;
  height: 40px;
}

.app.big svg {
  width: 44px;
  height: 44px;
}

.app.fz svg {
  width: 48px;
  height: 48px;
}

.fz text {
  fill: #f3ebeb;
  font-family: "Liberation Sans", sans-serif;
  font-weight: 700;
  font-style: italic;
}

.fz-f { font-size: 43px; }
.fz-z { font-size: 40px; }

.on::after {
  content: "";
  position: absolute;
  bottom: -4px;
  width: 5px;
  height: 5px;
  border-radius: 50%;
  background: #0c1016;
}

.cal {
  width: 40px;
  height: 40px;
  display: flex;
  flex-direction: column;
  overflow: hidden;
  border-radius: 9px;
  background: #eeedec;
  font-family: Inter, sans-serif;
  font-size: 25px;
  line-height: 27px;
  text-align: center;
}

.cal small {
  background: #d7404a;
  color: #fff;
  font-size: 8px;
  font-weight: 600;
  line-height: 13px;
}

.adobe {
  width: 40px;
  height: 40px;
  border-radius: 9px;
  background: #0f2737;
  color: #4aa3ee;
  font-size: 22px;
  font-weight: 700;
  line-height: 38px;
  text-align: center;
}

.dock-rule {
  width: 1px;
  height: 46px;
  margin: 0 12px;
  background: #364050;
}

.folder {
  width: 46px;
  height: 40px;
  margin-right: 11px;
}

.trash {
  width: 36px;
  height: 48px;
}
```
